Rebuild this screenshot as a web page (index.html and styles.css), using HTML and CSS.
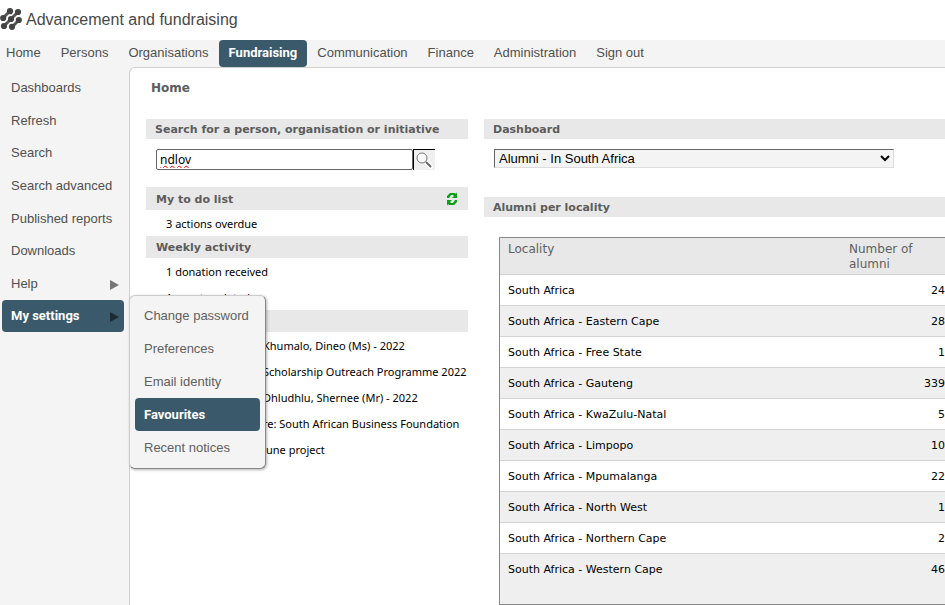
FILE: index.html
```html
<!DOCTYPE html>
<html lang="en">
<head>
<meta charset="utf-8">
<title>Advancement and fundraising</title>
<link rel="stylesheet" href="styles.css">
</head>
<body>
<header class="brand">
  <svg class="logo" viewBox="0 0 22 22" width="22" height="22" aria-hidden="true">
    <g stroke="#555" stroke-width="3" fill="none">
      <path d="M3 10 10 3M4 18 18 4M12 19 19 12"/>
    </g>
    <g fill="#444">
      <circle cx="10" cy="3.200" r="3.100"/><circle cx="3.200" cy="10" r="3.100"/>
      <circle cx="18" cy="4" r="3.100"/><circle cx="11" cy="11" r="3.100"/><circle cx="4" cy="18" r="3.100"/>
      <circle cx="18.800" cy="12" r="3.100"/><circle cx="12" cy="18.800" r="3.100"/>
    </g>
  </svg>
  <span class="brand-name">Advancement and fundraising</span>
</header>
<nav class="topnav">
  <a href="#">Home</a>
  <a href="#">Persons</a>
  <a href="#">Organisations</a>
  <a href="#" class="active">Fundraising</a>
  <a href="#">Communication</a>
  <a href="#">Finance</a>
  <a href="#">Administration</a>
  <a href="#">Sign out</a>
</nav>
<div class="layout">
  <aside class="sidebar">
    <ul class="side-list">
      <li><a href="#">Dashboards</a></li>
      <li><a href="#">Refresh</a></li>
      <li><a href="#">Search</a></li>
      <li><a href="#">Search advanced</a></li>
      <li><a href="#">Published reports</a></li>
      <li><a href="#">Downloads</a></li>
      <li><a href="#">Help<svg class="arrow" viewBox="0 0 9 10" width="9" height="10"><path d="M0 0 9 5 0 10z"/></svg></a></li>
      <li class="open">
        <a href="#" class="active">My settings<svg class="arrow" viewBox="0 0 9 10" width="9" height="10"><path d="M0 0 9 5 0 10z"/></svg></a>
        <ul class="submenu">
          <li><a href="#">Change password</a></li>
          <li><a href="#">Preferences</a></li>
          <li><a href="#">Email identity</a></li>
          <li><a href="#" class="active">Favourites</a></li>
          <li><a href="#">Recent notices</a></li>
        </ul>
      </li>
    </ul>
  </aside>
  <main class="content">
    <h1>Home</h1>
    <div class="columns">
      <div class="left">
        <h2 class="bar"><label for="q">Search for a person, organisation or initiative</label></h2>
        <form class="search">
          <input id="q" type="text" value="ndlov">
          <button type="button" aria-label="Search">
            <svg viewBox="0 0 18 18" width="18" height="18" fill="none">
              <path d="M11 11 17 17" stroke="#fff" stroke-width="4"/>
              <circle cx="7" cy="7" r="5" fill="#f8f8f8" stroke="#777"/>
              <path d="M4 7a3 3 0 0 1 3-3" stroke="#fff" stroke-width="2"/>
              <path d="M11 11 16 16" stroke="#666" stroke-width="2"/>
            </svg>
          </button>
        </form>
        <h2 class="bar sub todo">My to do list
          <svg viewBox="0 0 12 14" width="12" height="14" fill="#0a9f16" aria-hidden="true">
            <path d="M1 6V4L4 1h5l1 1 1-2v6H6l2-2-1-1H5L3 6z"/>
            <path d="M11 8v2l-3 3H3l-1-1-1 2V8h5L4 10l1 1h2l2-3z"/>
          </svg>
        </h2>
        <ul class="lines"><li>3 actions overdue</li></ul>
        <h2 class="bar sub">Weekly activity</h2>
        <ul class="lines"><li>1 donation received</li><li>1 event updated</li></ul>
        <div class="bar sub"></div>
        <ul class="lines names">
          <li>Khumalo, Dineo (Ms) - 2022</li>
          <li>Scholarship Outreach Programme 2022</li>
          <li>Dhludhlu, Shernee (Mr) - 2022</li>
          <li>re: South African Business Foundation</li>
          <li>June project</li>
        </ul>
      </div>
      <div class="right">
        <h2 class="bar"><label for="dash">Dashboard</label></h2>
        <select id="dash"><option>Alumni - In South Africa</option></select>
        <h2 class="bar">Alumni per locality</h2>
        <table>
          <thead><tr><th>Locality</th><th class="count">Number of alumni</th></tr></thead>
          <tbody>
            <tr><td>South Africa</td><td>24</td></tr>
            <tr><td>South Africa - Eastern Cape</td><td>28</td></tr>
            <tr><td>South Africa - Free State</td><td>1</td></tr>
            <tr><td>South Africa - Gauteng</td><td>339</td></tr>
            <tr><td>South Africa - KwaZulu-Natal</td><td>5</td></tr>
            <tr><td>South Africa - Limpopo</td><td>10</td></tr>
            <tr><td>South Africa - Mpumalanga</td><td>22</td></tr>
            <tr><td>South Africa - North West</td><td>1</td></tr>
            <tr><td>South Africa - Northern Cape</td><td>2</td></tr>
            <tr><td>South Africa - Western Cape</td><td>46</td></tr>
          </tbody>
        </table>
      </div>
    </div>
  </main>
</div>
</body>
</html>
```
FILE: styles.css
```css
* { box-sizing: border-box; }
body {
  margin: 0;
  min-height: 100vh;
  display: flex;
  flex-direction: column;
  background: #fff;
  color: #000;
  font: 13px/16px "Liberation Sans", Arial, sans-serif;
}
a { color: #505050; text-decoration: none; }
ul { list-style: none; margin: 0; padding: 0; }
h1, h2 { margin: 0; font-family: "DejaVu Sans", Verdana, sans-serif; color: #5c5c5c; }
.brand { height: 40px; display: flex; align-items: center; gap: 4px; }
.logo { margin-bottom: 3px; }
.brand-name { font-size: 16px; color: #484848; }
.topnav {
  display: flex;
  gap: 20px;
  padding-left: 6px;
  background: #f4f4f4;
  white-space: nowrap;
}
.topnav a { line-height: 25px; padding-bottom: 2px; }
.topnav .active {
  margin: 0 -10px;
  padding: 0 10px 2px;
  border-radius: 4px;
}
.active { background: #3a5a6b; font-family: Roboto, sans-serif; font-weight: bold; }
.layout { flex: 1; display: flex; background: #f4f4f4; }
.sidebar { flex: none; width: 129px; padding: 5px 5px 0 2px; }
.side-list { display: grid; grid-auto-rows: 1fr; height: 261px; }
.side-list a {
  display: flex;
  justify-content: space-between;
  align-items: center;
  height: 32px;
  padding: 0 5px 0 9px;
  border-radius: 4px;
  white-space: nowrap;
}
.arrow { fill: #777; margin-top: 2px; }
.active .arrow { fill: #1c2b34; }
.open { position: relative; }
.submenu {
  position: absolute;
  z-index: 2;
  left: 127px;
  top: -5px;
  width: 137px;
  padding: 3px 5px 4px;
  background: #f4f4f4;
  border: 1px solid #888;
  border-top-color: #ccc;
  border-left-color: #ccc;
  border-radius: 6px;
  box-shadow: 1px 1px 3px rgba(0, 0, 0, 0.3);
}
.submenu a { height: 33px; color: #606060; }
.topnav .active, .side-list .active { color: #fff; }
.content {
  flex: 1;
  min-width: 0;
  padding: 12px 0 0 16px;
  background: #fff;
  border: solid #d0d0d0;
  border-width: 1px 0 0 1px;
  border-radius: 6px 0 0 0;
}
h1 { padding-left: 5px; font-size: 12px; line-height: 16px; margin-bottom: 23px; }
.columns { display: flex; gap: 16px; }
.left { flex: none; width: 322px; }
.right { flex: 1; min-width: 0; }
.bar { padding: 1px 9px 0; background: #e8e8e8; font-size: 11px; line-height: 19px; white-space: nowrap; }
.bar.sub { display: flex; justify-content: space-between; align-items: center; padding: 1px 10px 0; min-height: 22px; }
.bar.todo { min-height: 23px; }
.search { display: flex; margin: 10px 10px 17px; }
.search input {
  width: 257px;
  height: 21px;
  margin: 0;
  padding: 0 3px;
  border: 1px solid #666;
  border-radius: 2px;
  font: 12px "Noto Sans", sans-serif;
  text-decoration: underline wavy #e00 1px;
}
.search button {
  width: 22px;
  height: 21px;
  padding: 1px;
  background: #f0f0f0;
  border: solid #000;
  border-width: 1px 0 0 1px;
}
.search svg { display: block; }
.lines { font: 11px/24px "Noto Sans", "Segoe UI", sans-serif; padding-left: 20px; white-space: nowrap; }
.lines li { padding-top: 2px; }
.lines.names { padding-left: 117px; }
select {
  display: block;
  width: 400px;
  height: 19px;
  margin: 10px 9px 29px 10px;
  padding: 0;
  color: #000;
  background: #f4f4f4;
  border: 1px solid #ddd;
  border-top-color: #666;
  border-left-color: #666;
  border-radius: 0;
  font: 13px "Liberation Sans", Arial, sans-serif;
}
table {
  width: calc(100% - 15px);
  margin: 20px 0 0 15px;
  border-collapse: separate;
  border-spacing: 0;
  border: solid #888;
  border-width: 1px 0 1px 1px;
  font: 11px/15px "DejaVu Sans", Verdana, sans-serif;
}
th {
  padding: 4px 8px 2px;
  background: #e8e8e8;
  border-bottom: 1px solid #d4d4d4;
  color: #606060;
  font-size: 12px;
  font-weight: normal;
  text-align: left;
  vertical-align: top;
}
.count { width: 104px; }
td { height: 31px; padding: 0 0 0 8px; border-bottom: 1px solid #d4d4d4; }
td:last-child { text-align: right; }
tr:nth-child(even) td { background: #efefef; }
tr:last-child td { height: 50px; padding-bottom: 20px; border-bottom: 0; }
```
